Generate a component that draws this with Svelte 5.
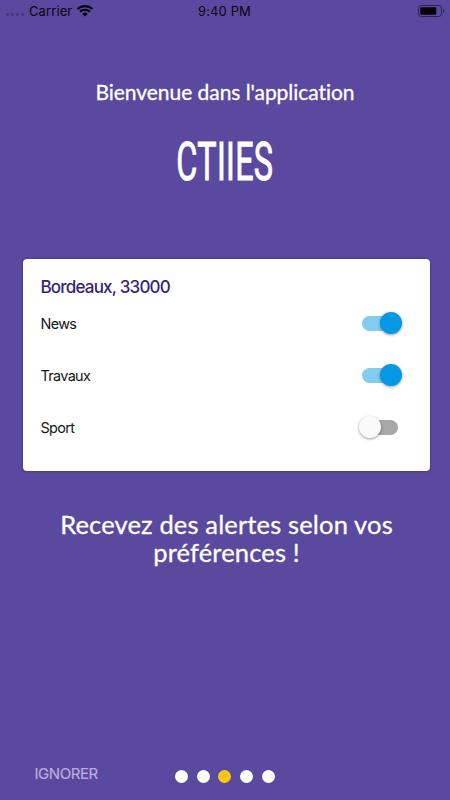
<script>
  const topics = [
    { name: 'News', on: true },
    { name: 'Travaux', on: true },
    { name: 'Sport', on: false }
  ];
  const pages = [0, 1, 2, 3, 4];
  const current = 2;
</script>

<main class="screen">
  <header class="status">
    <div class="carrier">
      <span class="signal"><i></i><i></i><i></i><i></i></span>
      <span class="name">Carrier</span>
      <svg width="16" height="12" viewBox="0 0 16 12">
        <path d="M.6 4.1a10.6 10.6 0 0 1 14.8 0M3.1 6.8a7 7 0 0 1 9.8 0" fill="none" stroke="#08060d" stroke-width="2.1" />
        <path d="M8 11.6 5.3 8.9a3.9 3.9 0 0 1 5.4 0z" fill="#08060d" />
      </svg>
    </div>
    <span class="time">9:40 PM</span>
    <svg class="battery" width="27" height="12" viewBox="0 0 27 12">
      <rect x=".5" y=".5" width="23" height="11" rx="2.8" fill="none" stroke="#2c244f" />
      <rect x="2.2" y="2.2" width="16" height="7.6" rx="1" fill="#050308" />
      <path d="M25 4v4q1.3-.7 1.3-2T25 4z" fill="#2c244f" />
    </svg>
  </header>

  <h2 class="welcome">Bienvenue dans l'application</h2>
  <h1 class="brand"><span>CTIIES</span></h1>

  <section class="card">
    <h3>Bordeaux, 33000</h3>
    {#each topics as topic}
      <div class="row">
        <span>{topic.name}</span>
        <div class="switch" class:on={topic.on}><b></b></div>
      </div>
    {/each}
  </section>

  <p class="message"><span>Recevez des alertes selon vos</span><span>préférences !</span></p>

  <footer>
    <span class="skip">IGNORER</span>
    <div class="dots">
      {#each pages as page}
        <i class:active={page === current}></i>
      {/each}
    </div>
  </footer>
</main>

<style>
  :global(body) { margin: 0; background: #59499f; }
  .screen {
    width: 450px;
    height: 800px;
    display: flex;
    flex-direction: column;
    background: #59499f;
    font-family: Inter, Roboto, sans-serif;
    overflow: hidden;
    box-sizing: border-box;
  }
  .status {
    height: 22px;
    flex: none;
    display: grid;
    grid-template-columns: 1fr auto 1fr;
    align-items: center;
    padding: 0 7px 0 6px;
    color: #08060d;
    font-size: 13px;
    line-height: 22px;
  }
  .carrier { display: flex; align-items: center; }
  .signal { display: flex; gap: 2px; margin: 7px 5px 0 0; }
  .signal i { width: 3px; height: 3px; border-radius: 1px; background: #463a7c; }
  .name { letter-spacing: 0.1px; margin-right: 5px; }
  .time { letter-spacing: 0.1px; }
  .battery { justify-self: end; margin-right: -2px; }
  h1, h2, h3, p { margin: 0; font-weight: 400; }
  .welcome {
    height: 30px;
    margin-top: 55px;
    text-align: center;
    color: #fff;
    font: 400 21px/30px Lato, sans-serif;
    -webkit-text-stroke: 0.3px #fff;
    letter-spacing: -0.05px;
  }
  .brand {
    height: 60px;
    margin-top: 24px;
    display: flex;
    justify-content: center;
    color: #fff;
    font: 400 54px/62px Roboto, sans-serif;
    -webkit-text-stroke: 1px #fff;
    letter-spacing: 0.5px;
  }
  .brand span { transform: scaleX(0.6); }
  .card {
    height: 212px;
    margin: 68px 20px 0 23px;
    padding: 17px 28px 0 17.5px;
    box-sizing: border-box;
    border-radius: 4px;
    background: #fff;
    box-shadow: 0 0 2px #30236c;
  }
  h3 {
    height: 21px;
    color: #35247c;
    font-size: 17px;
    font-weight: 500;
    line-height: 22px;
    letter-spacing: -0.8px;
  }
  .row {
    height: 52px;
    display: flex;
    align-items: center;
    justify-content: space-between;
    color: #15151a;
    font-size: 14.4px;
    letter-spacing: -0.65px;
  }
  .switch {
    width: 44px;
    height: 22px;
    display: flex;
    align-items: center;
    position: relative;
  }
  .switch::before {
    content: '';
    width: 36px;
    height: 15px;
    margin-left: 4px;
    border-radius: 8px;
    background: #a8a8a8;
  }
  .switch b {
    position: absolute;
    left: 1px;
    top: 0;
    width: 22px;
    height: 22px;
    border-radius: 50%;
    background: #fafafa;
    box-shadow: 0 1px 3px rgba(0, 0, 0, 0.4);
  }
  .switch.on::before { background: #82ccf1; }
  .switch.on b { left: 21.5px; background: #0698e4; }
  .message {
    margin: 39px 0 0 3px;
    display: flex;
    flex-direction: column;
    align-items: center;
    color: #fff;
    font: 400 25.5px/28px Lato, sans-serif;
    -webkit-text-stroke: 0.3px #fff;
    letter-spacing: 0.15px;
  }
  footer {
    margin-top: auto;
    height: 48px;
    display: flex;
    align-items: center;
    padding-left: 34.5px;
  }
  .skip {
    width: 140.5px;
    margin-top: -6px;
    color: #b9addf;
    font-size: 15px;
    letter-spacing: -0.45px;
    -webkit-text-stroke: 0.2px #b9addf;
  }
  .dots { display: flex; gap: 8.7px; }
  .dots i { width: 13px; height: 13px; border-radius: 50%; background: #fff; }
  .dots i.active { background: #fec416; }
</style>
